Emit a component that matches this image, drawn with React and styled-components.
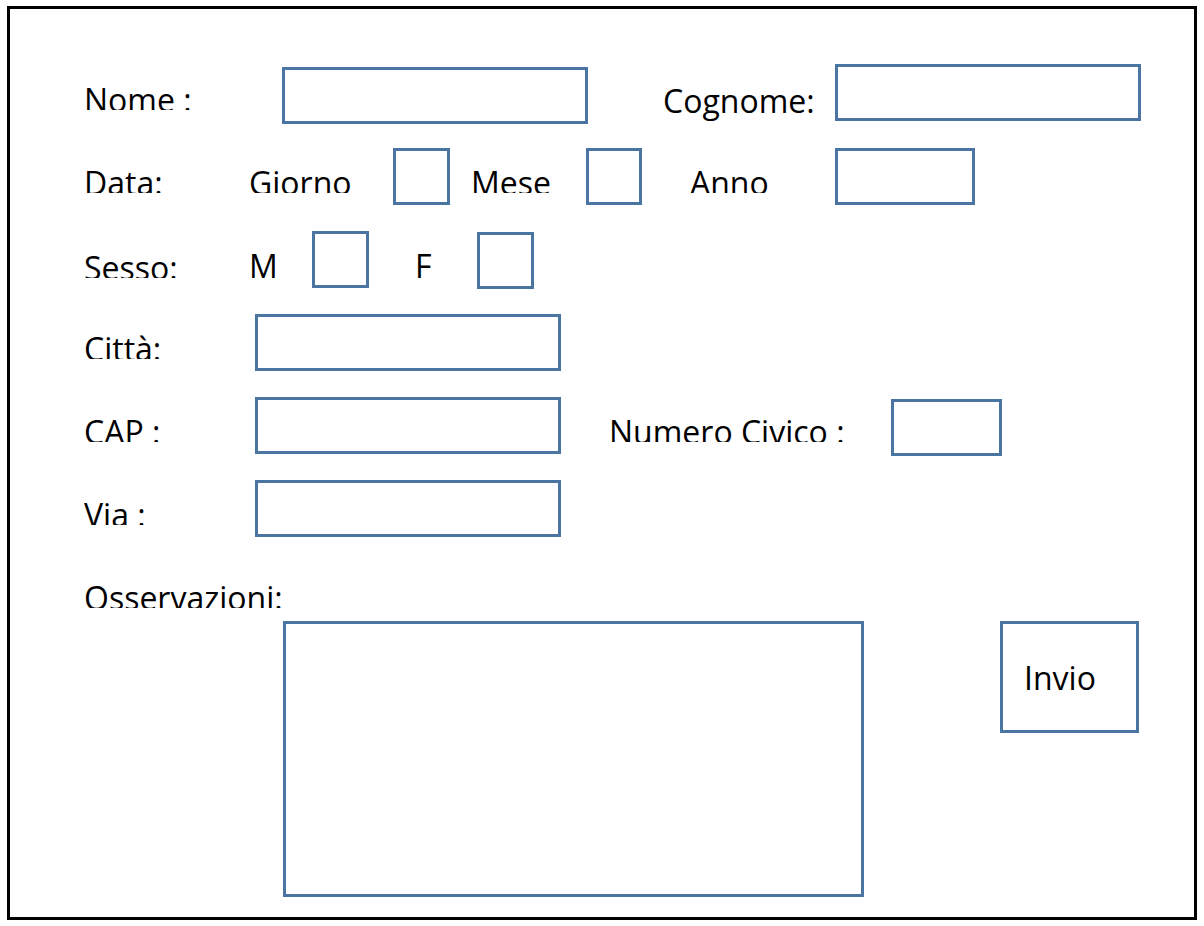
import React from "react";
import styled, { createGlobalStyle } from "styled-components";

const GlobalStyle = createGlobalStyle`
  html, body {
    margin: 0;
    padding: 0;
    background: #fff;
  }
  body {
    font-family: "Open Sans", "Liberation Sans", sans-serif;
  }
`;

const Frame = styled.form`
  box-sizing: border-box;
  margin: 6px 0 0 7px;
  width: 1190px;
  height: 914px;
  border: 3px solid #000;
  padding: 56px 0 0 74px;
  display: flex;
  flex-direction: column;
`;

const Rows = styled.div`
  display: flex;
  flex-direction: column;
  gap: 26px;
`;

const Row = styled.div`
  display: flex;
  align-items: flex-start;
  height: 57px;
`;

// labels in the mockup are cut just above the baseline, so most get a clip height
const Label = styled.label`
  box-sizing: border-box;
  flex: none;
  width: ${(p) => p.$w}px;
  margin-left: ${(p) => p.$ml || 0}px;
  margin-top: ${(p) => 14 + (p.$dy || 0)}px;
  height: ${(p) => (p.$clip ? `${p.$clip}px` : "auto")};
  overflow: hidden;
  font-size: 32px;
  line-height: 42px;
  color: #000;
  white-space: nowrap;
`;

const Field = styled.input`
  box-sizing: border-box;
  flex: none;
  width: ${(p) => p.$w}px;
  height: 57px;
  margin-top: ${(p) => p.$dy || 0}px;
  border: 3px solid #4a74a1;
  background: #fff;
  padding: 0 8px;
  font: inherit;
  font-size: 24px;
  outline: none;
`;

const Notes = styled.div`
  display: flex;
  flex-direction: column;
  margin-top: 40px;
`;

const NotesLabel = styled.label`
  height: 31px;
  overflow: hidden;
  font-size: 32px;
  line-height: 42px;
  white-space: nowrap;
`;

const Bottom = styled.div`
  display: flex;
  align-items: flex-start;
  margin-top: 13px;
`;

const TextArea = styled.textarea`
  box-sizing: border-box;
  margin: 0 0 0 199px;
  width: 581px;
  height: 276px;
  border: 3px solid #4a74a1;
  resize: none;
  outline: none;
  font: inherit;
  font-size: 24px;
`;

const SubmitButton = styled.button`
  box-sizing: border-box;
  margin-left: 136px;
  width: 139px;
  height: 112px;
  border: 3px solid #4a74a1;
  background: #fff;
  padding: 0 0 0 21px;
  text-align: left;
  font-family: "Open Sans", "Liberation Sans", sans-serif;
  font-size: 32px;
  color: #000;
  cursor: pointer;
`;

const App = () => {
  return (
    <>
      <GlobalStyle />
      <Frame onSubmit={(e) => e.preventDefault()}>
        <Rows>
          <Row>
            <Label $w={198} $clip={31}>Nome :</Label>
            <Field $w={306} $dy={2} />
            <Label $w={172} $ml={75} $dy={1}>Cognome:</Label>
            <Field $w={306} $dy={-1} />
          </Row>
          <Row>
            <Label $w={165} $clip={31}>Data:</Label>
            <Label $w={144} $clip={31}>Giorno</Label>
            <Field $w={57} />
            <Label $w={115} $ml={21} $clip={31}>Mese</Label>
            <Field $w={56} />
            <Label $w={145} $ml={48} $clip={31}>Anno</Label>
            <Field $w={140} />
          </Row>
          <Row>
            <Label $w={165} $clip={31} $dy={2}>Sesso:</Label>
            <Label $w={63}>M</Label>
            <Field $w={57} />
            <Label $w={62} $ml={46}>F</Label>
            <Field $w={57} $dy={1} />
          </Row>
          <Row>
            <Label $w={171} $clip={31}>Città:</Label>
            <Field $w={306} />
          </Row>
          <Row>
            <Label $w={171} $clip={31}>CAP :</Label>
            <Field $w={306} />
            <Label $w={282} $ml={48} $clip={31}>Numero Civico :</Label>
            <Field $w={111} $dy={2} />
          </Row>
          <Row>
            <Label $w={171} $clip={31}>Via :</Label>
            <Field $w={306} />
          </Row>
        </Rows>
        <Notes>
          <NotesLabel>Osservazioni:</NotesLabel>
          <Bottom>
            <TextArea />
            <SubmitButton type="submit">Invio</SubmitButton>
          </Bottom>
        </Notes>
      </Frame>
    </>
  );
};

export default App;
